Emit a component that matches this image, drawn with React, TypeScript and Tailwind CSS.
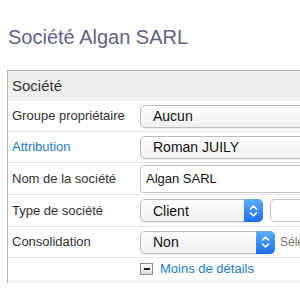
const font = { fontFamily: '"Liberation Sans", Arial, sans-serif' };

function Arrows() {
  return (
    <svg width="9" height="14" viewBox="0 0 9 14" fill="none" stroke="white" strokeWidth="1.6" strokeLinecap="round" strokeLinejoin="round">
      <path d="M1.5 5 L4.5 2 L7.5 5" />
      <path d="M1.5 9 L4.5 12 L7.5 9" />
    </svg>
  );
}

function Select({ value, width, arrow }: { value: string; width: string; arrow?: boolean }) {
  return (
    <div
      className={`${width} h-[23px] flex items-stretch rounded-[5px] border border-[#bdbdbd] bg-gradient-to-b from-white to-[#efefef] shadow-[0_1px_1px_rgba(0,0,0,0.08)]`}
    >
      <span className="flex-1 flex items-center pl-3 text-[14px] text-[#111] leading-none">{value}</span>
      {arrow && (
        <span className="w-[19px] -my-px -mr-px flex items-center justify-center rounded-r-[5px] bg-gradient-to-b from-[#5eaefc] to-[#1b6cef]">
          <Arrows />
        </span>
      )}
    </div>
  );
}

function Row({ label, link, children, h }: { label: string; link?: boolean; children: React.ReactNode; h: string }) {
  return (
    <div className={`grid grid-cols-[132px_1fr] items-center ${h} border-b border-[#e6e6e6]`}>
      <span className={`pl-1 text-[13px] ${link ? "text-[#1a7dc9]" : "text-[#333]"}`}>{label}</span>
      <div className="flex items-center">{children}</div>
    </div>
  );
}

export default function App() {
  return (
    <div className="w-[300px] h-[300px] overflow-hidden bg-white" style={font}>
      <h1 className="pl-2 pt-[25px] text-[20px] leading-[24px] text-[#62628a] font-normal">Société Algan SARL</h1>
      <div className="ml-[7px] mt-[21px] w-[420px] border-l border-t border-[#b3b3b3]">
        <div className="h-[30px] bg-[#f0f0f0] flex items-center pl-1 text-[15px] text-[#333]">Société</div>
        <Row label="Groupe propriétaire" h="h-[31px]">
          <Select value="Aucun" width="w-[260px]" />
        </Row>
        <Row label="Attribution" link h="h-[31px]">
          <Select value="Roman JUILY" width="w-[260px]" />
        </Row>
        <Row label="Nom de la société" h="h-[32px]">
          <div className="w-[260px] h-[28px] flex items-center pl-[5px] border border-[#c4c4c4] rounded-[3px] text-[13px] text-[#111]">
            Algan SARL
          </div>
        </Row>
        <Row label="Type de société" h="h-[32px]">
          <Select value="Client" width="w-[123px]" arrow />
          <div className="ml-[7px] w-[100px] h-[23px] rounded-[5px] border border-[#c4c4c4] bg-white" />
        </Row>
        <Row label="Consolidation" h="h-[31px]">
          <Select value="Non" width="w-[135px]" arrow />
          <span className="ml-[5px] text-[12px] text-[#777] whitespace-nowrap">Sélectionner...</span>
        </Row>
        <div className="grid grid-cols-[132px_1fr] items-center h-[22px]">
          <span />
          <div className="flex items-center gap-[7px]">
            <span className="w-[13px] h-[12px] border border-[#8c8c8c] bg-gradient-to-b from-white to-[#dcdcdc] flex items-center justify-center">
              <span className="w-[6px] h-[2px] bg-[#222]" />
            </span>
            <span className="text-[13px] text-[#1a7dc9]">Moins de détails</span>
          </div>
        </div>
        <div className="h-[3px] bg-[#f3f3f3]" />
      </div>
    </div>
  );
}
